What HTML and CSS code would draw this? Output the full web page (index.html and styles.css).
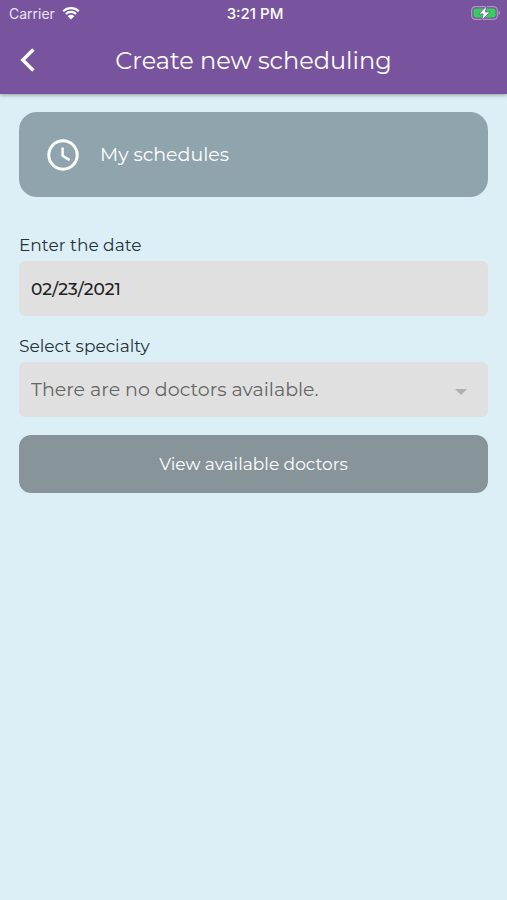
FILE: index.html
```html
<!DOCTYPE html>
<html lang="en">
<head>
<meta charset="UTF-8">
<meta name="viewport" content="width=device-width, initial-scale=1.0">
<meta name="theme-color" content="#78549f">
<title>Create new scheduling</title>
<link rel="stylesheet" href="styles.css">
</head>
<body>
<header class="header">
  <div class="status-bar">
    <div class="carrier">
      <span>Carrier</span>
      <svg class="wifi" viewBox="0 0 18 14" aria-hidden="true">
        <path d="M1.2 5.2a11.2 11.2 0 0 1 15.6 0M3.9 8a7.4 7.4 0 0 1 10.2 0" fill="none" stroke="#fff" stroke-width="2.2"/>
        <path d="M9 13.6 5.7 10.2a4.7 4.7 0 0 1 6.6 0z" fill="#fff"/>
      </svg>
    </div>
    <span class="time">3:21 PM</span>
    <svg class="battery" viewBox="0 0 30 14" aria-hidden="true">
      <rect x=".7" y=".7" width="25.6" height="12.6" rx="3.6" fill="none" stroke="#ad97c4" stroke-width="1.2"/>
      <rect x="2.5" y="2.5" width="22" height="9" rx="2" fill="#35cf5b"/>
      <path d="M27.6 4.8q1.6.6 1.6 2.2t-1.6 2.2z" fill="#ad97c4"/>
      <path d="M15.6 0 7.8 8h4.4L10.8 14 19 6h-4.6z" fill="#fff" stroke="#78549f" stroke-width=".8"/>
    </svg>
  </div>
  <div class="nav-bar">
    <button class="back" type="button" aria-label="Back">
      <svg viewBox="0 0 16 24" aria-hidden="true">
        <path d="M13.4 1.5 2.8 12l10.6 10.5" fill="none" stroke="#fff" stroke-width="3.4"/>
      </svg>
    </button>
    <h1>Create new scheduling</h1>
  </div>
</header>

<main class="content">
  <a class="card-link" href="#schedules">
    <svg class="clock" viewBox="0 0 32 32" aria-hidden="true">
      <circle cx="16" cy="16" r="14.2" fill="none" stroke="#fff" stroke-width="3"/>
      <path d="M15.6 8.5v8.4l7 4.2" fill="none" stroke="#fff" stroke-width="2.4"/>
    </svg>
    <span>My schedules</span>
  </a>

  <form class="form">
    <label for="date">Enter the date</label>
    <input class="field" type="text" id="date" value="02/23/2021">

    <label for="specialty">Select specialty</label>
    <div class="select-box">
      <select class="field" id="specialty">
        <option>There are no doctors available.</option>
      </select>
      <svg class="arrow" viewBox="0 0 12 6" aria-hidden="true"><path d="M0 0h12L6 6z" fill="#b0b0b0"/></svg>
    </div>

    <button class="btn" type="button">View available doctors</button>
  </form>
</main>
</body>
</html>
```

FILE: styles.css
```css
:root { --purple:#78549f; --bg:#dceff7; --field:#e0e0e0; --text:#263238; }
* { box-sizing:border-box; margin:0; padding:0; }
body {
  font-family:Montserrat,Inter,sans-serif;
  background:var(--bg); color:var(--text); min-height:100vh;
}
.header { background:var(--purple); color:white; box-shadow:0 1px 4px rgba(0,0,0,0.35); }
.status-bar {
  display:grid; grid-template-columns:1fr auto 1fr; align-items:center;
  height:26px; padding:0 6px 0 9px; font-family:Inter,sans-serif; font-size:14px;
}
.carrier { display:flex; align-items:center; gap:7px; color:#eae2f1; }
.wifi { width:18px; height:14px; }
.time { font-weight:500; font-size:15px; }
.battery { width:30px; height:14px; justify-self:end; }
.nav-bar {
  display:grid; grid-template-columns:56px 1fr 56px; align-items:center; height:68px;
}
.back {
  display:flex; align-items:center; height:48px; padding-left:20px;
  background:none; border:none; cursor:pointer;
}
.back svg { width:16px; height:24px; }
h1 { font-size:24px; font-weight:400; text-align:center; white-space:nowrap; }

.content { padding:18px 19px; }
.card-link {
  display:flex; align-items:center; gap:21px; height:85px; padding:0 28px;
  background:#90a4ae; border-radius:18px; color:white; font-size:19px;
  text-decoration:none;
}
.clock { width:32px; height:32px; }

.form { display:flex; flex-direction:column; margin-top:36px; }
label { font-size:17px; line-height:24px; margin-bottom:4px; }
.field {
  width:100%; height:55px; padding:0 12px; border:none; border-radius:6px;
  background:var(--field); font-family:inherit; font-size:17px; font-weight:500;
  color:#212121; margin-bottom:18px;
}
.select-box { position:relative; }
.select-box .field {
  appearance:none; font-size:19px; font-weight:400; color:#666; padding-right:44px;
}
.arrow {
  position:absolute; right:21px; top:27px; width:12px; height:6px; pointer-events:none;
}
.btn {
  height:58px; border:none; border-radius:12px; background:#87959a; color:white;
  font-family:inherit; font-size:17px; cursor:pointer;
}
```
